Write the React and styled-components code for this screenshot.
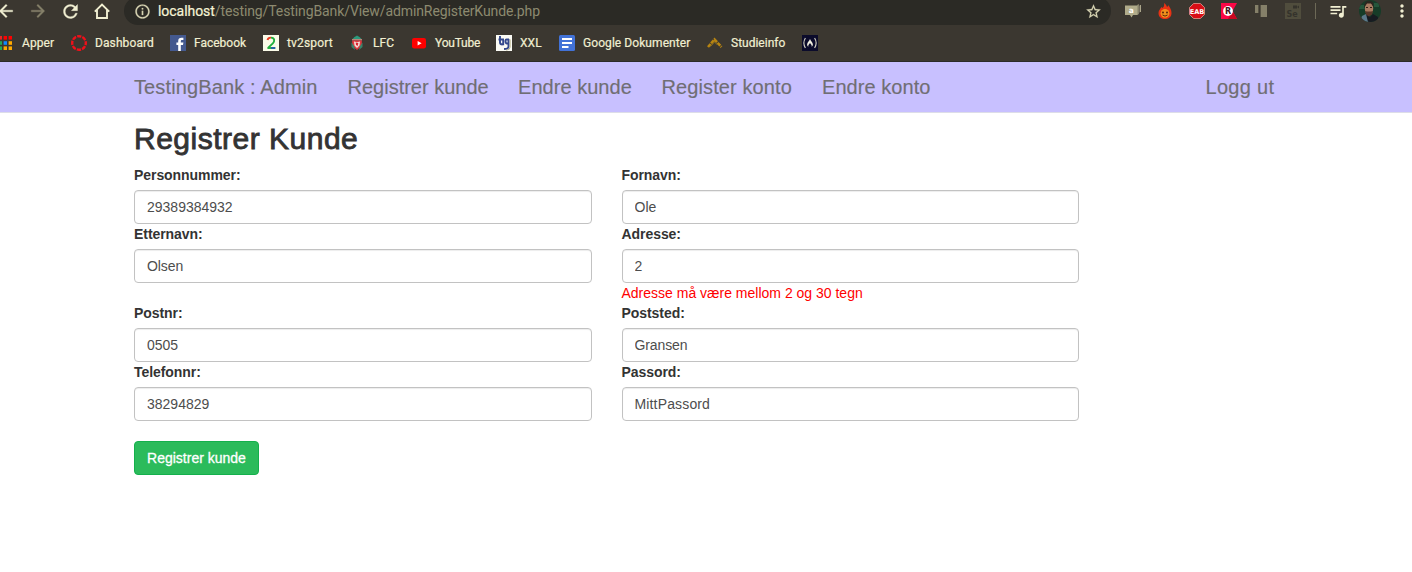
import React from "react";
import styled, { createGlobalStyle } from "styled-components";
import { MdArrowBack, MdArrowForward, MdRefresh, MdInfoOutline, MdStarBorder, MdQueueMusic, MdMoreVert } from "react-icons/md";

const GlobalStyle = createGlobalStyle`
  * { box-sizing: border-box; }
  body {
    margin: 0;
    background: #fff;
    color: #333;
    font: 14px/20px "Liberation Sans", Arial, sans-serif;
    overflow: hidden;
  }
`;

const Page = styled.div`
  width: 1412px;
  height: 572px;
  overflow: hidden;
`;

const Browser = styled.header`
  height: 62px;
  overflow: hidden;
  background: #3b3730;
  border-bottom: 1px solid #2b2a2a;
  color: #f1efd2;
  font-family: Roboto, sans-serif;
`;

const Toolbar = styled.div`
  display: flex;
  align-items: center;
  width: 1428px;
  height: 28px;
  margin: -3px 0 0 -10px;
  path[fill="none"] { stroke: none; }
`;

const Slot = styled.span`
  display: flex;
  flex: none;
  align-items: center;
  justify-content: center;
  width: 32px;
  height: 28px;
  color: ${(p) => (p.$dim ? "#858069" : "#f1efd2")};
  svg { display: block; }
`;

const AddressBar = styled.div`
  display: flex;
  align-items: center;
  flex: none;
  width: 987px;
  height: 28px;
  margin: 0 6px;
  padding: 0 9.5px 0 9.5px;
  border-radius: 14px;
  background: #2b2a25;
  color: #d8d5b4;
  svg { flex: none; stroke: currentColor; stroke-width: 0.3px; }
`;

const Url = styled.span`
  flex: 1;
  margin-left: 7.5px;
  color: #8d8a70;
  font-size: 14px;
  letter-spacing: -0.1px;
  white-space: nowrap;
  b {
    color: #f6f4d6;
    font-weight: 400;
    letter-spacing: -0.05px;
    -webkit-text-stroke: 0.2px #f6f4d6;
  }
`;

const Divider = styled.span`
  flex: none;
  width: 1px;
  height: 16px;
  margin: 0 6px;
  background: #6d6957;
`;

const Bookmarks = styled.div`
  display: flex;
  align-items: center;
  height: 36px;
  margin-left: -4px;
`;

const Bookmark = styled.div`
  display: flex;
  flex: none;
  align-items: center;
  gap: ${(p) => p.$gap || 8}px;
  width: ${(p) => p.$width}px;
  font-size: 12px;
  letter-spacing: ${(p) => p.$track || 0}px;
  white-space: nowrap;
  -webkit-text-stroke: 0.2px #f1efd2;
  svg { flex: none; display: block; -webkit-text-stroke: 0; }
`;

const Navbar = styled.nav`
  display: flex;
  height: 51px;
  padding: 0 138px 0 134px;
  background: #c8c0ff;
  border-bottom: 1px solid #dddde8;
`;

const NavLink = styled.a`
  flex: none;
  width: ${(p) => p.$width}px;
  color: #706e74;
  font-size: 20px;
  line-height: 50px;
  letter-spacing: ${(p) => p.$track || 0}px;
  white-space: nowrap;
  -webkit-text-stroke: 0.15px #706e74;
  &:last-child { margin-left: auto; }
`;

const Main = styled.main`
  width: 1079px;
  padding: 9px 0 0 134px;
`;

const Title = styled.h2`
  margin: 0 0 10px;
  font-size: 30px;
  font-weight: 400;
  line-height: 33px;
  letter-spacing: 0.5px;
  -webkit-text-stroke: 0.85px #333;
`;

const Fields = styled.form`
  display: grid;
  grid-template-columns: 1fr 1fr;
  column-gap: 30px;
`;

const Field = styled.div`
  display: flex;
  flex-direction: column;
`;

const Label = styled.label`
  margin-bottom: 5px;
  font-weight: 700;
  letter-spacing: -0.06px;
`;

const Input = styled.input`
  width: 100%;
  height: 34px;
  padding: 6px 12px;
  border: 1px solid #c2c2c2;
  border-radius: 4px;
  box-shadow: inset 0 1px 1px rgba(0, 0, 0, 0.075);
  color: #4d4d4d;
  font: inherit;
  letter-spacing: ${(p) => p.$track || 0}px;
  outline: none;
`;

const ErrorText = styled.span`
  color: #f00;
`;

const Submit = styled.button`
  height: 34px;
  width: 125px;
  margin-top: 20px;
  padding: 0;
  border: 1px solid #14b04c;
  border-radius: 4px;
  background: #2bbb5b;
  color: #fff;
  font: inherit;
  -webkit-text-stroke: 0.3px #fff;
`;

const Svg = ({ children, size = 16 }) => (
  <svg width={size} height={size} viewBox="0 0 16 16" fill="none">{children}</svg>
);

const HomeIcon = () => (
  <Svg><path d="M0.8 8.6 8 1.6l7.2 7M3 7v8h10V7" stroke="currentColor" strokeWidth="1.9" /></Svg>
);

const AppsIcon = () => (
  <Svg>
    {["#e22", "#f00", "#f00", "#2a5", "#18f", "#fa0", "#2a5", "#fa0", "#fa0"].map((c, i) => (
      <rect key={i} x={2.6 + (i % 3) * 5} y={1 + Math.floor(i / 3) * 5.2} width="3.4" height="3.6" fill={c} />
    ))}
  </Svg>
);

const CanvasIcon = () => (
  <Svg><circle cx="8" cy="8" r="6.8" stroke="#f0101a" strokeWidth="2.4" strokeDasharray="4.25 1.09" strokeDashoffset="2.1" /></Svg>
);

const FacebookIcon = () => (
  <Svg>
    <rect width="16" height="16" fill="#44598f" />
    <path d="M8.2 16V10H6.4V7.5h1.8V6c0-2.3 1.2-3.3 3.2-3.3h2V5h-1.3c-1 0-1.3.4-1.3 1.2v1.3h2.6L13 10h-2.2v6z" fill="#fff" />
  </Svg>
);

const Tv2Icon = () => (
  <Svg>
    <rect width="16" height="16" fill="#fbfbe8" />
    <path d="M4.5 5C5 3 6.5 2.5 8 2.6" stroke="#e73a20" strokeWidth="1.9" />
    <path d="M8 2.6c4 .2 3.8 3.6 1.8 5.8L5.3 12.6" stroke="#20ae3d" strokeWidth="1.9" />
    <path d="M4.4 13h3.6" stroke="#20ae3d" strokeWidth="1.9" />
    <path d="M8 13h4.4" stroke="#1c5d9d" strokeWidth="1.9" />
  </Svg>
);

const LfcIcon = () => (
  <Svg>
    <path d="M3 4.5 5.5 2 8 .5l2.5 1.5L13 4.5z" fill="#2c9a7c" />
    <path d="M3 4h10v1.5H3z" fill="#b98578" />
    <path d="M3.2 5.5h9.6V11L8 15l-4.8-4z" fill="#df3940" />
    <path d="m5 6.5 3 .8 3-.8-.5 4L8 13l-2.5-2.5z" fill="#f3ded8" />
    <path d="m6.7 7.5 2.6.5-.6 3-1.7-1z" fill="#d9252e" />
    <path d="M2.5 7.5v4.5l3.5 3-1-4zM13.5 7.5v4.5L10 15l1-4z" fill="#37836b" />
  </Svg>
);

const YoutubeIcon = () => (
  <Svg>
    <rect x="1" y="3" width="14" height="10.5" rx="2.2" fill="#f00" />
    <path d="m6.6 5.9 4 2.3-4 2.3z" fill="#fff" />
  </Svg>
);

const TgIcon = () => (
  <Svg>
    <rect width="16" height="16" fill="#fbfbf5" />
    <path d="M4 1v6.500q0 2 2.500 2M7.200 10.300V5M2.500 4.500H8M13 4.500H10.500Q9.500 4.500 9.500 6q0 2.500 1.500 2.500h2M12.500 4v7.500q0 2.500-4.500 2.500" stroke="#34488c" strokeWidth="1.900" />
    <path d="M14.200 4.500V12q0 3-4 3.200" stroke="#aaa26f" strokeWidth=".7" />
  </Svg>
);

const DocsIcon = () => (
  <Svg>
    <rect width="16" height="16" rx="1.5" fill="#4272d7" />
    <path d="M3 4h10M3 8h10M3 12h6.5" stroke="#fff" strokeWidth="1.9" />
  </Svg>
);

const StudyIcon = () => (
  <Svg>
    <path d="M1 12 7.5 4.5 14.5 12" stroke="#b78411" strokeWidth="2.6" strokeDasharray="4 .8" />
    <path d="M3.5 11.5 7.5 7l3 3" stroke="#856a20" />
  </Svg>
);

const FccIcon = () => (
  <Svg>
    <rect width="16" height="16" fill="#0b0b2b" />
    <path d="M3.4 3Q.3 8 3.4 13M12.6 3q3.1 5 0 10" stroke="#d5d4c5" strokeWidth="1.1" />
    <path d="M8 4c.8 2 2.8 3.5 2.9 5.5 0 1-.5 1.7-1.2 2.2.3-1.7-.7-2.4-1.7-3.7-1 1.3-2 2-1.7 3.7-.7-.5-1.2-1.2-1.2-2.2C5.2 7.5 7.2 6 8 4z" fill="#f0eee0" />
  </Svg>
);

const ExtLabel = styled.text`
  font-family: "DejaVu Sans", sans-serif;
  font-weight: 700;
  text-anchor: middle;
`;

const ChatIcon = () => (
  <Svg>
    <path d="M13 2.5h1.5v7H13zM15 2h1v7h-1z" fill="#aaa58a" />
    <path d="m12 2 2-1v10l-2 1z" fill="#858069" />
    <path d="M0 2.5h12.5V12H8l-1.5 2.5L5 12H0z" fill="#b0ab8a" />
    <ExtLabel x="6.2" y="9.7" fontSize="7.5" fill="#fff">a</ExtLabel>
  </Svg>
);

const FlameIcon = () => (
  <Svg>
    <path d="M7 0c2 1 2.5 3 3 4 1-.5 1-1 1-2 2 2 3.5 5 3.5 8 0 4-3 6-6.5 6s-6.500-2-6.500-6c0-3 2-4 3-6l1 1C7 4 7.5 2 7 0z" fill="#e83214" />
    <circle cx="8" cy="10.3" r="4.4" fill="#f0901c" />
    <circle cx="6" cy="9.5" r="1" fill="#5a260d" />
    <circle cx="10" cy="9.5" r="1" fill="#5a260d" />
    <path d="M5.5 12q2.5 2.2 5 0" stroke="#5a260d" />
  </Svg>
);

const StopIcon = () => (
  <Svg>
    <path d="M4.7.4h6.6l4.3 4.3v6.6l-4.3 4.3H4.7L.4 11.300V4.7z" fill="#d80d16" stroke="#f0a59b" strokeWidth=".8" />
    <ExtLabel x="8" y="10.5" fontSize="6.6" fill="#fff">EAB</ExtLabel>
  </Svg>
);

const RakutenIcon = () => (
  <Svg>
    <path d="M0 0h16l-4.5 8 4.5 8H0z" fill="#fb0746" />
    <path d="M7 16 11.5 8 16 16z" fill="#c90720" />
    <circle cx="7" cy="8" r="4.9" fill="#fff" />
    <ExtLabel x="7.2" y="11" fontSize="8" fill="#3d1520">R</ExtLabel>
  </Svg>
);

const PanelsIcon = () => (
  <Svg>
    <path d="M2 2h3v8H2z" fill="#858069" />
    <path d="M8 2h6v12H8z" fill="#858069" />
    <path d="M5 2h1v8H5zM7 2h1v12H7z" fill="#565244" />
  </Svg>
);

const SeleniumIcon = () => (
  <Svg>
    <rect width="16" height="16" fill="#504d3d" />
    <path d="M8 2.5h4v3H8zM12 4 14 2.5v3z" fill="#35332c" />
    <ExtLabel x="7" y="14" fontSize="8" fill="#35332c">Se</ExtLabel>
  </Svg>
);

const AvatarIcon = () => (
  <svg width="22" height="22" viewBox="0 0 22 22">
    <defs><clipPath id="avatar"><circle cx="11" cy="11" r="11" /></clipPath></defs>
    <g clipPath="url(#avatar)">
      <rect width="22" height="22" fill="#173c28" />
      <path d="M0 5h5v4H0zM15 3h5v4h-5z" fill="#25563b" />
      <path d="M1 22 3 16l4-2 4 4v4z" fill="#5c788a" />
      <path d="m7 14 4 3 3-3 5 3v5H9z" fill="#171b21" />
      <ellipse cx="10" cy="8.5" rx="4.2" ry="6.5" fill="#a87b61" />
      <path d="M5.500 7C5 2 8 0 11 1c3 0 4 3 3.500 6L12 3.500H8z" fill="#2c2620" />
      <path d="M6 11q4 1 8 0l-1 3.500-3 2-3-2z" fill="#5a392a" />
      <path d="M7 7.5h2m2 0h2" stroke="#382018" strokeWidth="1" />
    </g>
  </svg>
);

const bookmarks = [
  { icon: <AppsIcon />, text: "Apper", width: 75, gap: 10, track: 0.1 },
  { icon: <CanvasIcon />, text: "Dashboard", width: 99, track: 0.1 },
  { icon: <FacebookIcon />, text: "Facebook", width: 93 },
  { icon: <Tv2Icon />, text: "tv2sport", width: 86, track: 0.15 },
  { icon: <LfcIcon />, text: "LFC", width: 62, track: 0.1 },
  { icon: <YoutubeIcon />, text: "YouTube", width: 85, track: -0.2 },
  { icon: <TgIcon />, text: "XXL", width: 63, track: 0.1 },
  { icon: <DocsIcon />, text: "Google Dokumenter", width: 148, track: 0.07 },
  { icon: <StudyIcon />, text: "Studieinfo", width: 95 },
  { icon: <FccIcon />, text: "", width: 16 },
];

const links = [
  { text: "TestingBank : Admin", width: 213.5, track: 0.12 },
  { text: "Registrer kunde", width: 170.5 },
  { text: "Endre kunde", width: 143.5, track: 0.04 },
  { text: "Register konto", width: 160.5, track: 0.1 },
  { text: "Endre konto", width: 120, track: 0.06 },
  { text: "Logg ut", width: 68.5, track: 0.3 },
];

const fields = [
  { label: "Personnummer:", value: "29389384932" },
  { label: "Fornavn:", value: "Ole" },
  { label: "Etternavn:", value: "Olsen", track: -0.1 },
  { label: "Adresse:", value: "2", error: "Adresse må være mellom 2 og 30 tegn" },
  { label: "Postnr:", value: "0505" },
  { label: "Poststed:", value: "Gransen", track: -0.1 },
  { label: "Telefonnr:", value: "38294829" },
  { label: "Passord:", value: "MittPassord", track: 0.15 },
];

export default function App() {
  return (
    <Page>
      <GlobalStyle />
      <Browser>
        <Toolbar>
          <Slot><MdArrowBack size={20} stroke="currentColor" strokeWidth={0.4} /></Slot>
          <Slot $dim><MdArrowForward size={20} stroke="currentColor" strokeWidth={0.4} /></Slot>
          <Slot><MdRefresh size={21} stroke="currentColor" strokeWidth={0.4} /></Slot>
          <Slot><HomeIcon /></Slot>
          <AddressBar>
            <MdInfoOutline size={17} />
            <Url><b>localhost</b>/testing/TestingBank/View/adminRegisterKunde.php</Url>
            <MdStarBorder size={17} />
          </AddressBar>
          <Slot><ChatIcon /></Slot>
          <Slot><FlameIcon /></Slot>
          <Slot><StopIcon /></Slot>
          <Slot><RakutenIcon /></Slot>
          <Slot><PanelsIcon /></Slot>
          <Slot><SeleniumIcon /></Slot>
          <Divider />
          <Slot><MdQueueMusic size={20} /></Slot>
          <Slot><AvatarIcon /></Slot>
          <Slot><MdMoreVert size={20} /></Slot>
        </Toolbar>
        <Bookmarks>
          {bookmarks.map((b, i) => (
            <Bookmark key={i} $width={b.width} $gap={b.gap} $track={b.track}>{b.icon}{b.text}</Bookmark>
          ))}
        </Bookmarks>
      </Browser>
      <Navbar>
        {links.map((l) => (
          <NavLink key={l.text} $width={l.width} $track={l.track}>{l.text}</NavLink>
        ))}
      </Navbar>
      <Main>
        <Title>Registrer Kunde</Title>
        <Fields>
          {fields.map((f) => (
            <Field key={f.label}>
              <Label>{f.label}</Label>
              <Input defaultValue={f.value} $track={f.track} />
              {f.error && <ErrorText>{f.error}</ErrorText>}
            </Field>
          ))}
        </Fields>
        <Submit type="button">Registrer kunde</Submit>
      </Main>
    </Page>
  );
}
